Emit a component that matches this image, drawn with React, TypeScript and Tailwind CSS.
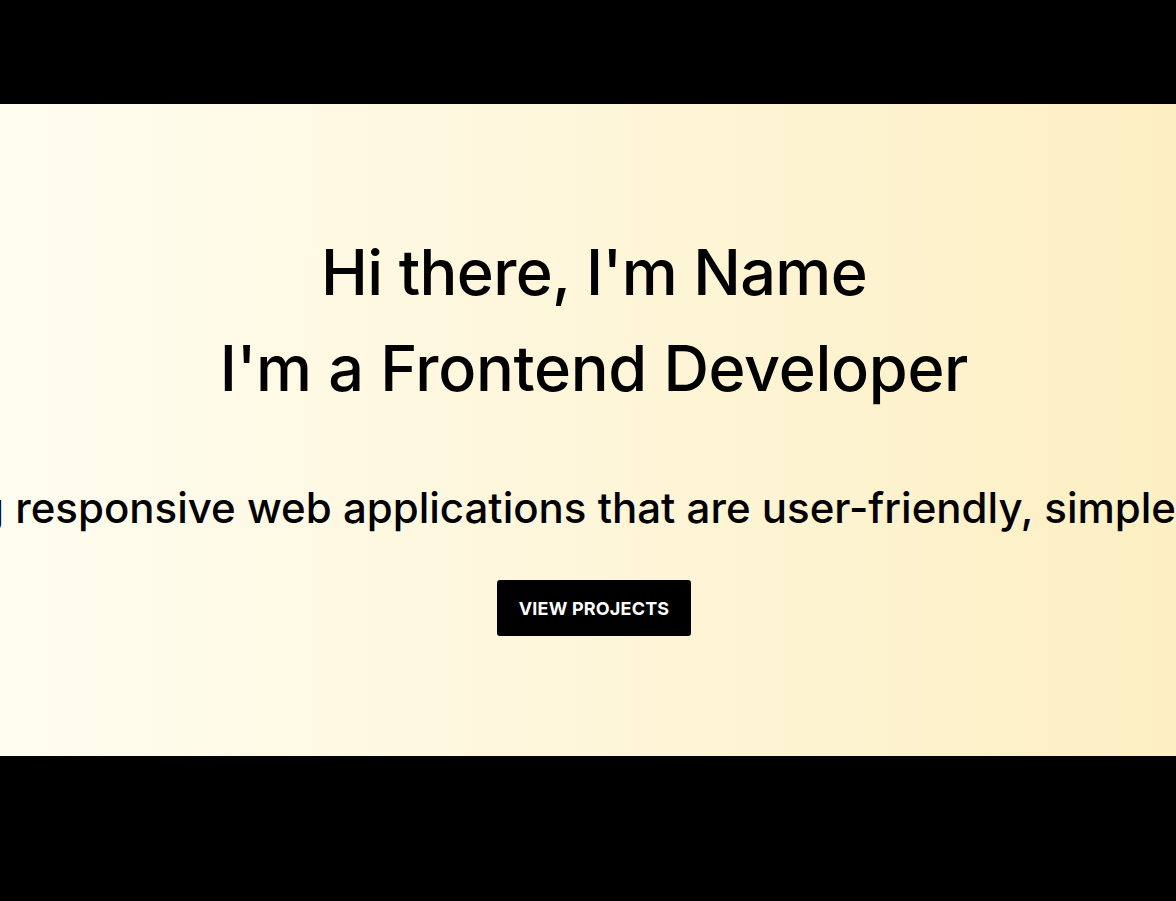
export default function App() {
  return (
    <div className="min-h-[901px] bg-black" style={{ fontFamily: "Inter, 'Open Sans', sans-serif" }}>
      {/* top bar */}
      <header className="h-[104px] bg-black"></header>

      {/* hero */}
      <section className="h-[652px] pl-[12px] bg-gradient-to-r from-[#fffdf0] to-[#fdefc3] flex flex-col items-center justify-center overflow-hidden">
        <h1 className="text-center text-[63px] leading-[96px] font-medium text-black tracking-[-0.01em]">
          <div>Hi there, I'm Name</div>
          <div className="tracking-[-0.005em]">I'm a Frontend Developer</div>
        </h1>

        <div className="mt-[62px] -ml-[12px] w-[1176px] overflow-hidden flex whitespace-pre text-[42px] leading-[60px] font-medium text-black">
          <div className="w-[4px] shrink-0 flex justify-end">
            <span>I specialize in building</span>
          </div>
          <span> responsive web applications that are user-friendly, simple and efficient.</span>
        </div>

        <a
          href="#projects"
          className="mt-[42px] h-[56px] w-[194px] flex items-center justify-center rounded-[3px] bg-black text-white text-[18px] font-bold tracking-[0.01em]"
        >
          VIEW PROJECTS
        </a>
      </section>
    </div>
  );
}
